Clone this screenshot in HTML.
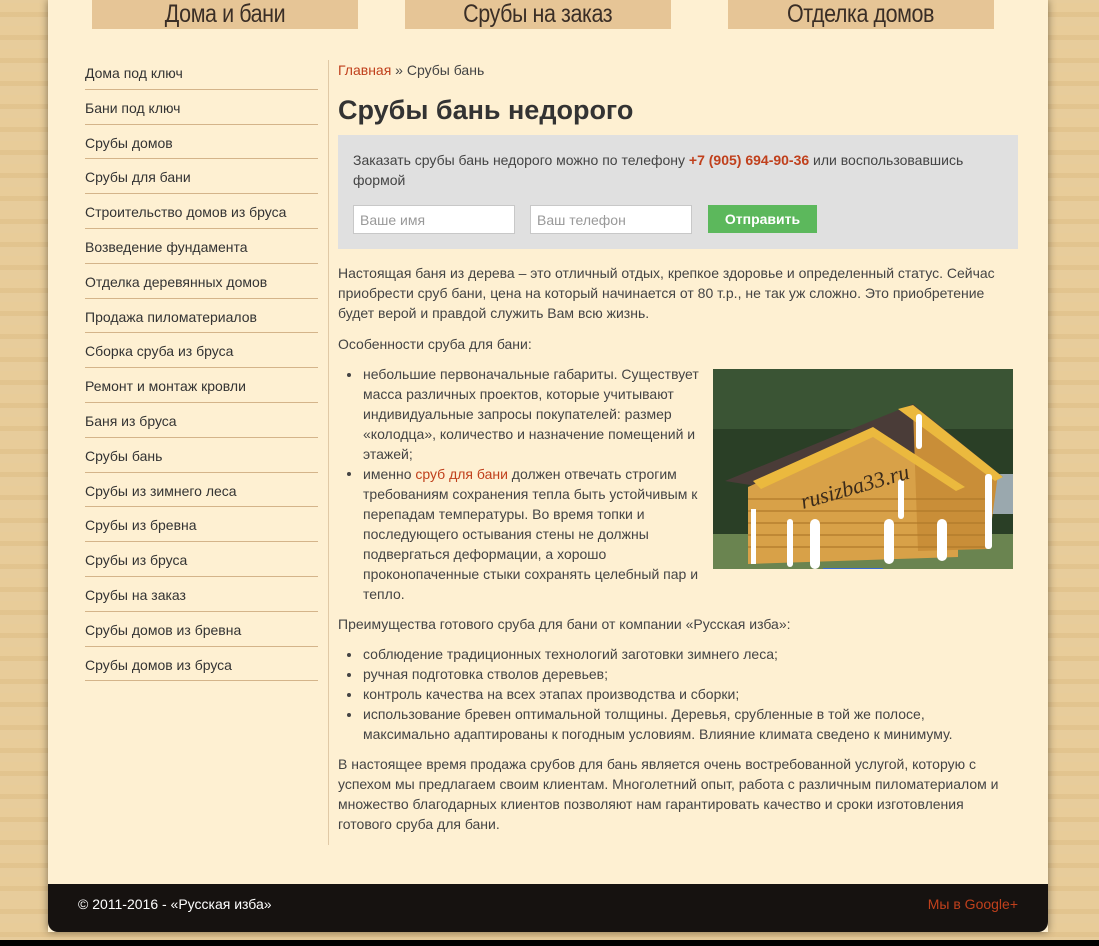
<!DOCTYPE html>
<html><head><meta charset="utf-8">
<style>
*{margin:0;padding:0;box-sizing:border-box}
html,body{width:1099px;height:946px;overflow:hidden}
body{background:#e6c995;font-family:"Liberation Sans",sans-serif;font-size:14px;color:#444;position:relative;
background-image:repeating-linear-gradient(0deg,rgba(255,255,255,.06) 0 9px,rgba(160,110,40,.06) 9px 14px,rgba(255,240,200,.08) 14px 23px);}
.page{position:absolute;left:48px;top:0;width:1000px;height:932px;background:#fef0d2;box-shadow:0 0 8px rgba(0,0,0,.45)}
.bottom{position:absolute;left:0;top:940px;width:1099px;height:6px;background:#000}
.tab{position:absolute;top:0;height:29px;width:266px;background:#e6c596;color:#3a2e26;font-size:25px;text-align:center;line-height:28px}
.tab span{display:inline-block;transform:scaleX(.86);letter-spacing:-0.5px}
.side{position:absolute;left:85px;top:55px;width:233px}
.side div{height:34.8px;border-bottom:1px solid #d4b48a;padding-top:10px;color:#333;font-size:14px;white-space:nowrap}
.vline{position:absolute;left:328px;top:60px;width:1px;height:785px;background:#e0c9a6}
.t{position:absolute;left:338px;white-space:nowrap;line-height:20px}
a{color:#c0401c;text-decoration:none}
.box{position:absolute;left:338px;top:135px;width:680px;height:114px;background:#e0e0e0}
.inp{position:absolute;top:205px;width:162px;height:29px;background:#fff;border:1px solid #c8c8c8;color:#999;padding:6px 6px;font-size:14px}
.btn{position:absolute;left:708px;top:205px;width:109px;height:28px;background:#5cb85c;color:#fff;font-weight:bold;text-align:center;line-height:28px;font-size:14px}
.b{position:absolute;width:4px;height:4px;border-radius:2px;background:#444}
.foot{position:absolute;left:48px;top:884px;width:1000px;height:48px;background:#161210;border-radius:0 0 10px 10px;color:#fff;font-size:14px}
</style></head><body>
<div class="page"></div>
<div class="tab" style="left:92px"><span>Дома и бани</span></div>
<div class="tab" style="left:405px"><span>Срубы на заказ</span></div>
<div class="tab" style="left:728px"><span>Отделка домов</span></div>

<div class="side">
<div>Дома под ключ</div><div>Бани под ключ</div><div>Срубы домов</div><div>Срубы для бани</div>
<div>Строительство домов из бруса</div><div>Возведение фундамента</div><div>Отделка деревянных домов</div>
<div>Продажа пиломатериалов</div><div>Сборка сруба из бруса</div><div>Ремонт и монтаж кровли</div>
<div>Баня из бруса</div><div>Срубы бань</div><div>Срубы из зимнего леса</div><div>Срубы из бревна</div>
<div>Срубы из бруса</div><div>Срубы на заказ</div><div>Срубы домов из бревна</div><div>Срубы домов из бруса</div>
</div>
<div class="vline"></div>

<div class="t" style="top:60px"><a>Главная</a> » Срубы бань</div>
<div class="t" style="top:94px;font-size:27px;font-weight:bold;color:#333;line-height:32px">Срубы бань недорого</div>
<div class="box"></div>
<div class="t" style="left:353px;top:150px;color:#444">Заказать срубы бань недорого можно по телефону <b style="color:#c0401c">+7 (905) 694-90-36</b> или воспользовавшись<br>формой</div>
<div class="inp" style="left:353px">Ваше имя</div>
<div class="inp" style="left:530px">Ваш телефон</div>
<div class="btn">Отправить</div>

<div class="t" style="top:263px">Настоящая баня из дерева – это отличный отдых, крепкое здоровье и определенный статус. Сейчас<br>приобрести сруб бани, цена на который начинается от 80 т.р., не так уж сложно. Это приобретение<br>будет верой и правдой служить Вам всю жизнь.</div>
<div class="t" style="top:334px">Особенности сруба для бани:</div>
<div class="t" style="left:363px;top:364px">небольшие первоначальные габариты. Существует<br>масса различных проектов, которые учитывают<br>индивидуальные запросы покупателей: размер<br>«колодца», количество и назначение помещений и<br>этажей;<br>именно <a>сруб для бани</a> должен отвечать строгим<br>требованиям сохранения тепла быть устойчивым к<br>перепадам температуры. Во время топки и<br>последующего остывания стены не должны<br>подвергаться деформации, а хорошо<br>проконопаченные стыки сохранять целебный пар и<br>тепло.</div>
<div class="b" style="left:347px;top:373px"></div>
<div class="b" style="left:347px;top:472px"></div>

<svg style="position:absolute;left:713px;top:369px" width="300" height="200" viewBox="0 0 300 200">
<rect width="300" height="200" fill="#2a3f26"/>
<rect x="0" y="0" width="300" height="60" fill="#3a5434"/>
<rect x="0" y="165" width="300" height="35" fill="#6a8450"/>
<rect x="255" y="105" width="45" height="40" fill="#9aa8ae"/>
<polygon points="12,112 200,35 290,108 250,115 160,60 50,118" fill="#4a3c38"/>
<polygon points="35,118 160,62 245,115 245,188 35,195" fill="#d8a148"/>
<polygon points="200,40 285,105 275,180 205,182" fill="#c98e38"/>
<polygon points="40,112 160,58 252,118 243,122 160,68 48,120" fill="#ebb93e"/>
<polygon points="185,40 200,36 290,108 282,112" fill="#ebb93e"/>
<g stroke="#b07a2a" stroke-width="1.2">
<line x1="35" y1="130" x2="275" y2="130"/><line x1="35" y1="142" x2="275" y2="142"/><line x1="35" y1="154" x2="275" y2="154"/><line x1="35" y1="166" x2="275" y2="166"/><line x1="35" y1="178" x2="275" y2="178"/>
</g>
<g fill="#fff"><rect x="97" y="150" width="10" height="50" rx="5"/><rect x="171" y="150" width="10" height="45" rx="5"/><rect x="224" y="150" width="10" height="42" rx="5"/><rect x="203" y="45" width="6" height="35" rx="3"/><rect x="272" y="105" width="7" height="75" rx="3"/><rect x="185" y="110" width="6" height="40" rx="3"/><rect x="38" y="140" width="5" height="55"/><rect x="74" y="150" width="6" height="48" rx="3"/></g>
<rect x="110" y="199" width="60" height="3" fill="#3a6ad0"/>
<text x="90" y="140" font-family="Liberation Serif,serif" font-style="italic" font-size="22" fill="#3a2a1a" transform="rotate(-16 90 140)">rusizba33.ru</text>
</svg>

<div class="t" style="top:614px">Преимущества готового сруба для бани от компании «Русская изба»:</div>
<div class="t" style="left:363px;top:644px">соблюдение традиционных технологий заготовки зимнего леса;<br>ручная подготовка стволов деревьев;<br>контроль качества на всех этапах производства и сборки;<br>использование бревен оптимальной толщины. Деревья, срубленные в той же полосе,<br>максимально адаптированы к погодным условиям. Влияние климата сведено к минимуму.</div>
<div class="b" style="left:347px;top:653px"></div><div class="b" style="left:347px;top:673px"></div><div class="b" style="left:347px;top:693px"></div><div class="b" style="left:347px;top:713px"></div>
<div class="t" style="top:754px">В настоящее время продажа срубов для бань является очень востребованной услугой, которую с<br>успехом мы предлагаем своим клиентам. Многолетний опыт, работа с различным пиломатериалом и<br>множество благодарных клиентов позволяют нам гарантировать качество и сроки изготовления<br>готового сруба для бани.</div>

<div class="foot"><span style="position:absolute;left:30px;top:12px">© 2011-2016 - «Русская изба»</span><a style="position:absolute;right:30px;top:12px">Мы в Google+</a></div>
<div class="bottom"></div>
</body></html>
